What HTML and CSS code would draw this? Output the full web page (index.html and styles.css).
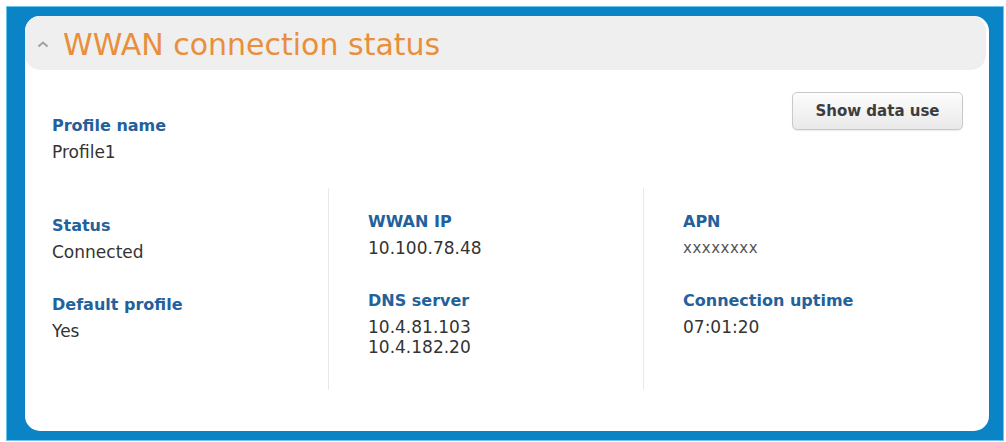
FILE: index.html
```html
<!DOCTYPE html>
<html>
<head>
<meta charset="utf-8">
<title>WWAN connection status</title>
<link rel="stylesheet" href="styles.css">
</head>
<body>
<div class="frame">
  <div class="panel">
    <div class="panel-head">
      <svg class="toggle" width="12" height="8" viewBox="0 0 12 8"><polyline points="1.5,6.5 6,2.5 10.5,6.5" fill="none" stroke="#a0a0a0" stroke-width="2"/></svg>
      <h2>WWAN connection status</h2>
    </div>
    <div class="panel-body">
      <div class="top-row">
        <dl class="field">
          <dt>Profile name</dt>
          <dd>Profile1</dd>
        </dl>
        <button type="button">Show data use</button>
      </div>
      <div class="columns">
        <div class="col col-1">
          <dl class="field">
            <dt>Status</dt>
            <dd>Connected</dd>
          </dl>
          <dl class="field">
            <dt>Default profile</dt>
            <dd>Yes</dd>
          </dl>
        </div>
        <div class="col">
          <dl class="field">
            <dt>WWAN IP</dt>
            <dd>10.100.78.48</dd>
          </dl>
          <dl class="field">
            <dt>DNS server</dt>
            <dd>10.4.81.103<br>10.4.182.20</dd>
          </dl>
        </div>
        <div class="col">
          <dl class="field">
            <dt>APN</dt>
            <dd class="masked">xxxxxxxx</dd>
          </dl>
          <dl class="field">
            <dt>Connection uptime</dt>
            <dd>07:01:20</dd>
          </dl>
        </div>
      </div>
    </div>
  </div>
</div>
</body>
</html>
```

FILE: styles.css
```css
body { margin: 0; padding: 7px 3px 2px 7px; background: white; font: 17px/20px "DejaVu Sans", Verdana, sans-serif; color: #333; }
.frame { padding: 9px 14px 9px 18px; background: #0a84c6; box-shadow: 0 0 0 1px #6cc6ec; }
.panel { height: 415px; border-radius: 15px; background: white; }
.panel-head { display: flex; align-items: center; height: 54px; box-sizing: border-box; margin-right: 3px; padding: 3px 0 0 12px; border-radius: 15px; background: #efefef; }
.toggle { display: block; margin: 0 14px 2px 0; }
.panel-head h2 { margin: 0; font-size: 30px; line-height: 51px; font-weight: normal; color: #e98f3c; }
.panel-body { padding: 22px 26px 0 27px; }
.top-row { display: flex; justify-content: space-between; align-items: flex-start; }
.top-row .field { margin: 24px 0 0; }
button { width: 171px; height: 38px; margin: 0; padding: 0; border: 1px solid #c9c9c9; border-radius: 5px; background: linear-gradient(#fdfdfd, #e9e9e9); box-shadow: 0 1px 1px rgba(0,0,0,0.08); font: bold 15px/20px "DejaVu Sans", Verdana, sans-serif; color: #3d3d3d; }
.columns { display: grid; grid-template-columns: 276px 315px 1fr; height: 186px; margin-top: 26px; }
.col { padding-top: 24px; padding-left: 39px; border-left: 1px solid #e9e9e9; }
.col.col-1 { padding-top: 28px; padding-left: 0; border-left: 0; }
.field { margin: 0 0 33px; }
.field dt { margin-bottom: 6px; font-size: 16px; font-weight: bold; color: #22619b; }
.field dd { margin: 0; }
.field dd.masked { font-size: 15px; letter-spacing: 0.5px; color: #555; }
```
